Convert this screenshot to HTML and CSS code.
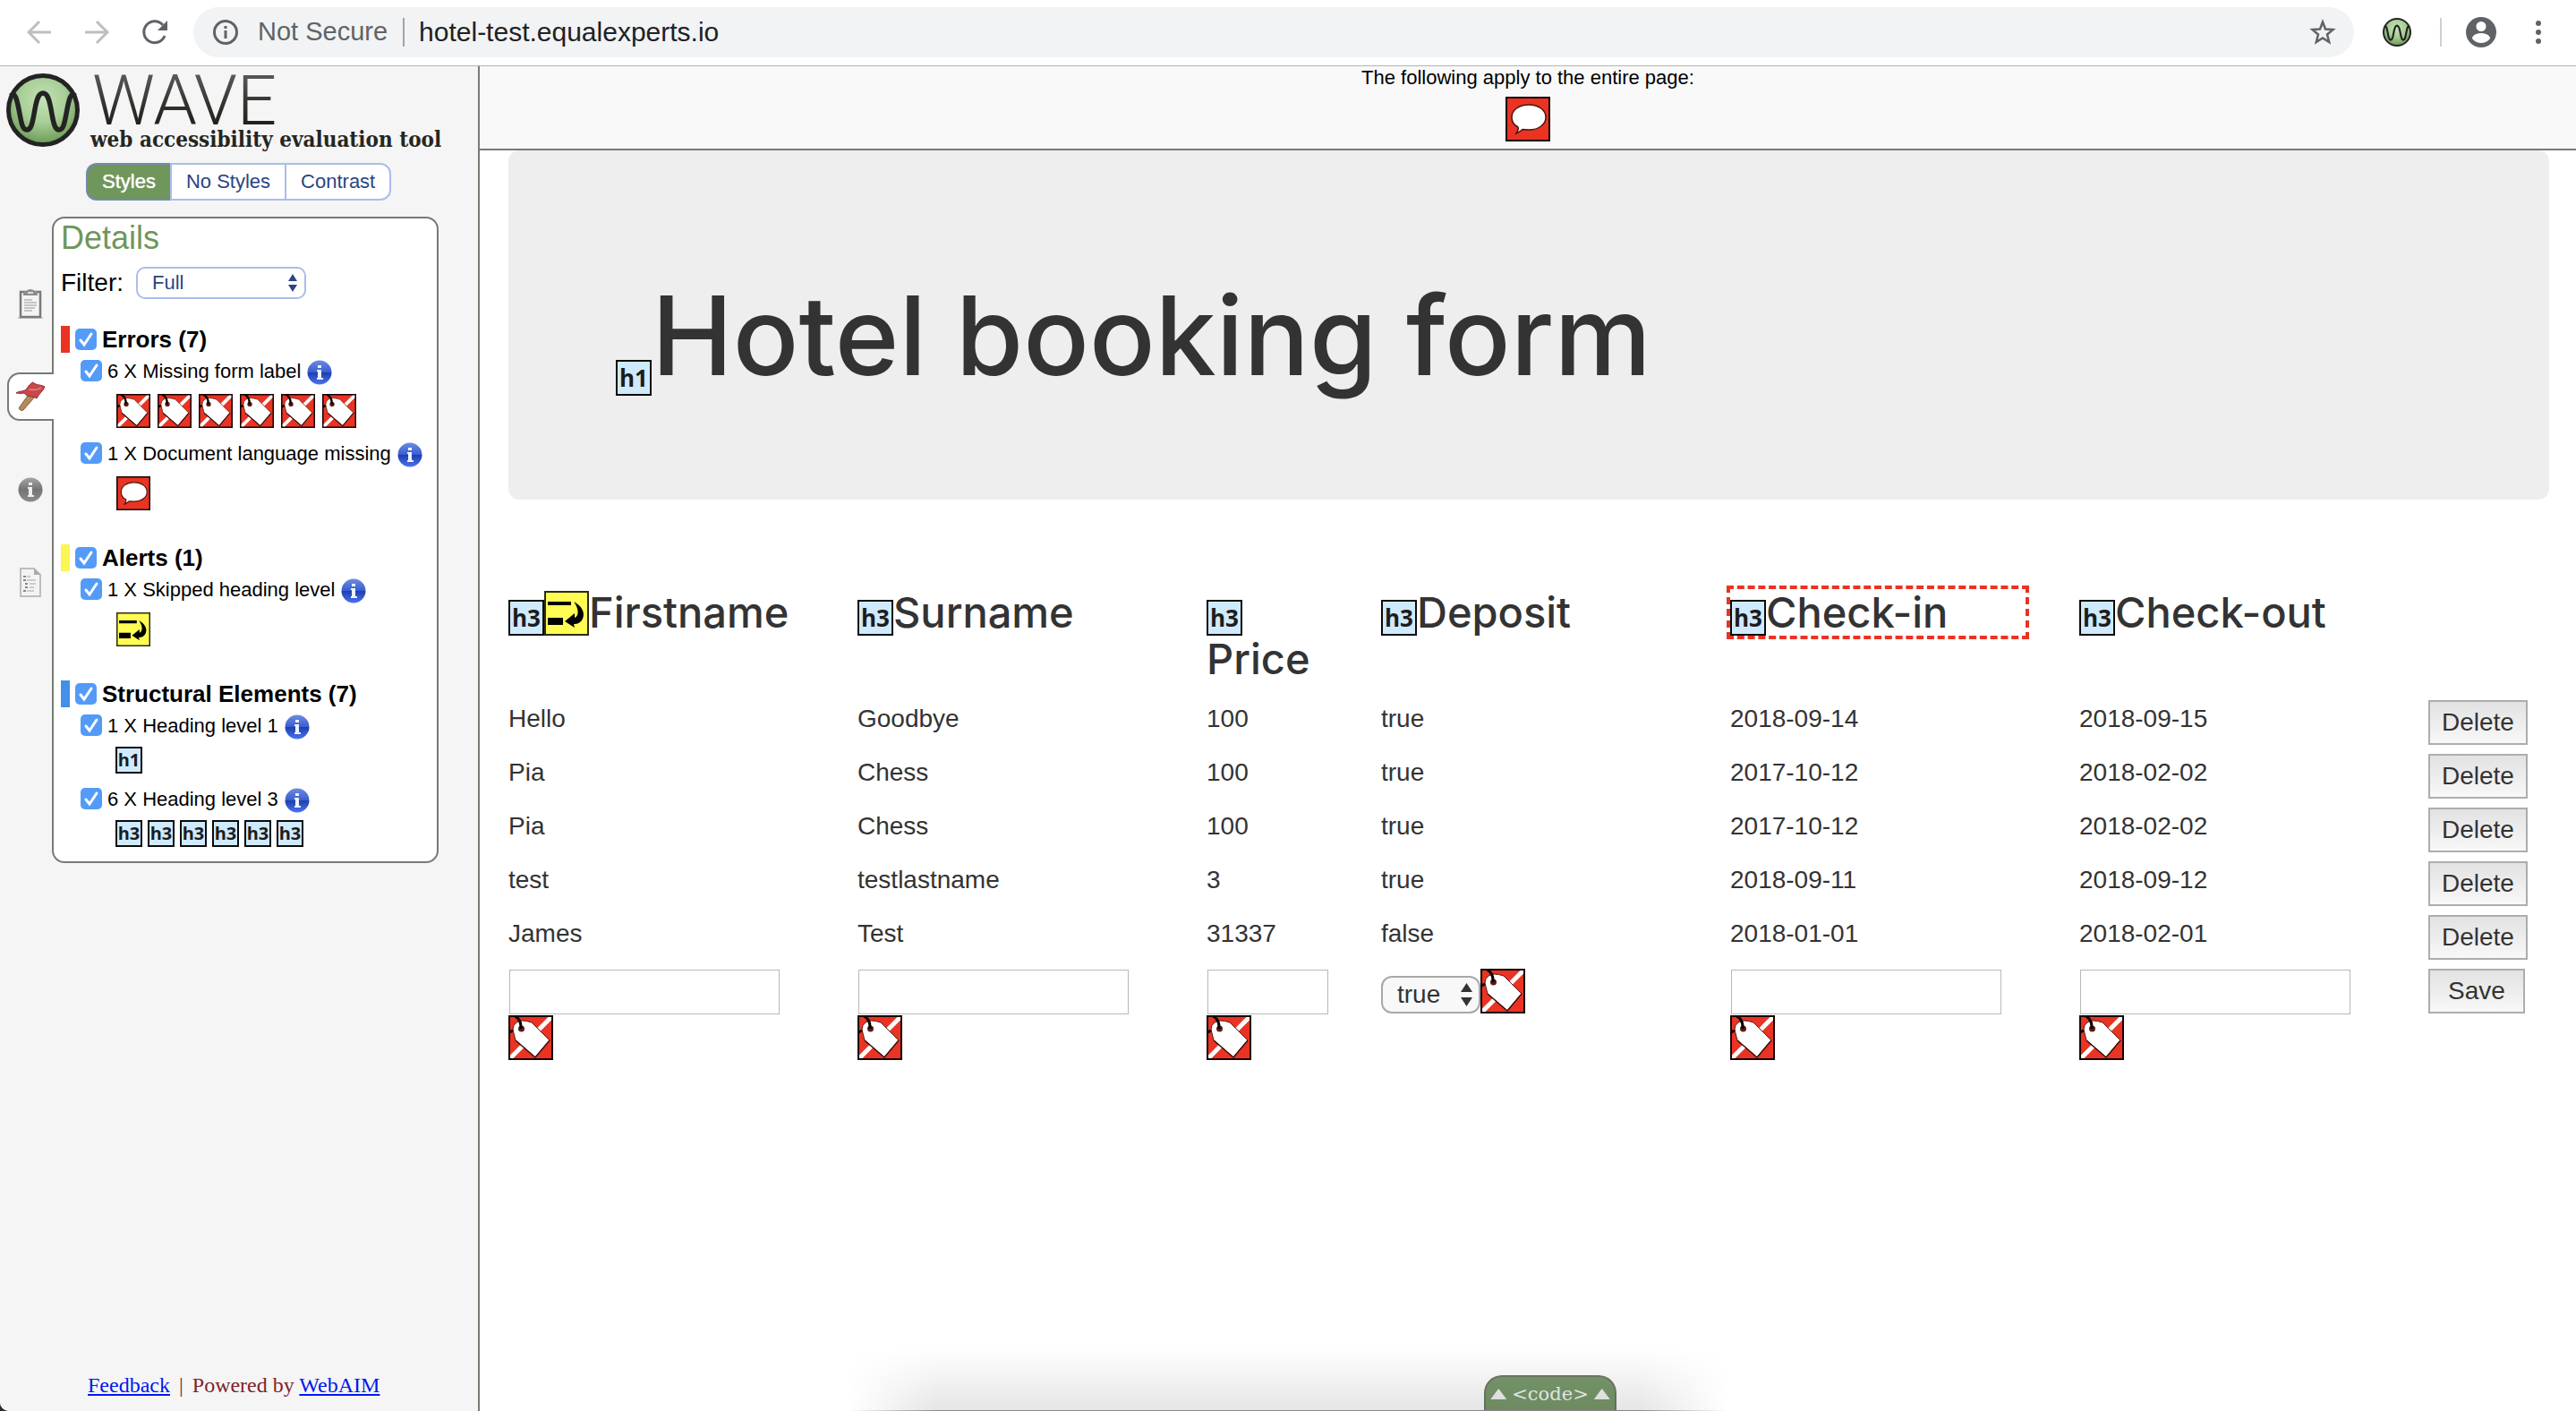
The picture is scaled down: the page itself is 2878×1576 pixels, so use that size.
FILE: index.html
```html
<!DOCTYPE html>
<html lang="en">
<head>
<meta charset="utf-8">
<title>Hotel booking form</title>
<link rel="stylesheet" href="styles.css">
</head>
<body>
<svg class="defs" aria-hidden="true">
  <defs>
    <radialGradient id="green" cx="0.5" cy="0.35" r="0.65">
      <stop offset="0" stop-color="#c3e2b4"/><stop offset="0.5" stop-color="#a9cf98"/><stop offset="1" stop-color="#6b9a54"/>
    </radialGradient>
    <linearGradient id="blue" x1="0" y1="0" x2="0" y2="1">
      <stop offset="0" stop-color="#6f8be0"/><stop offset="0.48" stop-color="#3a5fd0"/><stop offset="0.52" stop-color="#1f3fae"/><stop offset="1" stop-color="#4a74f2"/>
    </linearGradient>
    <linearGradient id="grey" x1="0" y1="0" x2="0" y2="1">
      <stop offset="0" stop-color="#a4a4a4"/><stop offset="0.5" stop-color="#747474"/><stop offset="1" stop-color="#8c8c8c"/>
    </linearGradient>
  </defs>
  <symbol id="wave" viewBox="0 0 82 82">
    <circle cx="41" cy="41" r="38.500" fill="url(#green)" stroke="#232323" stroke-width="5"/>
    <path d="M5 25C10 20 12 30 14 40C17 56 18 63 23 63C29 63 30 50 32 40C34 29 36 22 41 22C46 22 48 29 50 40C52 50 53 63 59 63C64 63 65 56 68 40C70 30 72 20 77 25" fill="none" stroke="#232323" stroke-width="5.500"/>
  </symbol>
  <symbol id="tag" viewBox="0 0 50 50">
    <rect width="50" height="50" fill="#ea3323"/>
    <path d="M-2 52L52 -2" stroke="#fff" stroke-width="5"/>
    <path d="M9 8Q14 4 26 8L46 28L30 47L8 28L5 16Q5 11 9 8Z" fill="#fff" stroke="#5a1510" stroke-width="1"/>
    <path d="M46 28L30 47L8 28" fill="none" stroke="#3c0f0b" stroke-width="1.500"/>
    <circle cx="14.500" cy="15" r="3.500" fill="#5c1a15"/>
    <path d="M6 0Q15 5 14 15M0 20Q3 17 5 18" fill="none" stroke="#000" stroke-width="3"/>
    <rect x="1" y="1" width="48" height="48" fill="none" stroke="#160505" stroke-width="2"/>
  </symbol>
  <symbol id="speech" viewBox="0 0 50 50">
    <rect x="1" y="1" width="48" height="48" fill="#ea3323" stroke="#160505" stroke-width="2"/>
    <path d="M26 9C37 9 45 15 45 23C45 31 37 37 26 37L19 36.500C17 38 15 40 12 41C14 38 15 36 14 34C10 32 7 28 7 23C7 15 15 9 26 9Z" fill="#fff" stroke="#4a1410" stroke-width="1.500"/>
  </symbol>
  <symbol id="skip" viewBox="0 0 50 50">
    <rect x="1" y="1" width="48" height="48" fill="#fffd54" stroke="#2c2c12" stroke-width="2"/>
    <path d="M4 12H30V16H4ZM4 30H21V38H4Z"/>
    <path d="M33 12C42 17 46 24 43 31C41 35 38 37 33 37L34 41L23 34L34 25L34 30C39 28 39 20 33 12Z"/>
  </symbol>
  <symbol id="info-blue" viewBox="0 0 28 28">
    <circle cx="14" cy="14" r="13.500" fill="url(#blue)"/>
    <path d="M12 6H16V9H12ZM11 11H16V20H18V22H11V20H12V13H11Z" fill="#eef2ff"/>
  </symbol>
  <symbol id="info-grey" viewBox="0 0 28 28">
    <circle cx="14" cy="14" r="13.500" fill="url(#grey)"/>
    <path d="M12 6H16V9H12ZM11 11H16V20H18V22H11V20H12V13H11Z" fill="#eee"/>
  </symbol>
</svg>

<header class="toolbar">
  <button class="tool" aria-label="Back"><svg width="28" height="28" viewBox="0 0 28 28" fill="none" stroke="#bdbec0" stroke-width="3"><path d="M27 14H3M14 2L2 14L14 26"/></svg></button>
  <button class="tool" aria-label="Forward"><svg width="28" height="28" viewBox="0 0 28 28" fill="none" stroke="#bdbec0" stroke-width="3"><path d="M1 14H25M14 2L26 14L14 26"/></svg></button>
  <button class="tool" aria-label="Reload"><svg width="30" height="30" viewBox="0 0 30 30"><path d="M26 19A12 12 0 1 1 24 7" fill="none" stroke="#5f6368" stroke-width="3"/><path d="M29 2V13H18Z" fill="#5f6368"/></svg></button>
  <div class="address">
    <svg width="28" height="28" viewBox="0 0 28 28"><circle cx="14" cy="14" r="12.500" fill="none" stroke="#5f6368" stroke-width="3"/><path d="M12.500 7H15.500V10H12.500ZM12.500 12H15.500V21H12.500Z" fill="#5f6368"/></svg>
    <span class="secure">Not Secure</span>
    <input class="url" aria-label="Address" value="hotel-test.equalexperts.io">
    <svg width="30" height="30" viewBox="0 0 30 30"><path d="M15 3.500L18 11.500L26.500 12L20 17.500L22.200 26L15 21.500L7.800 26L10 17.500L3.500 12L12 11.500Z" fill="none" stroke="#5f6368" stroke-width="2.500"/></svg>
  </div>
  <button class="tool ext" aria-label="WAVE extension"><svg width="32" height="32"><use href="#wave"/></svg></button>
  <span class="split"></span>
  <button class="tool" aria-label="Profile"><svg width="34" height="34" viewBox="0 0 34 34"><circle cx="17" cy="17" r="17" fill="#5f6368"/><circle cx="17" cy="10.500" r="5.500" fill="#fff"/><path d="M7 24C7 20 13 18 17 18S27 20 27 24C24.500 27.500 21 29 17 29S9.500 27.500 7 24Z" fill="#fff"/></svg></button>
  <button class="tool kebab" aria-label="Menu"><svg width="6" height="28" viewBox="0 0 6 28" fill="#5f6368"><circle cx="3" cy="4" r="3"/><circle cx="3" cy="14" r="3"/><circle cx="3" cy="24" r="3"/></svg></button>
</header>

<div class="workspace">
  <aside class="sidebar">
    <div class="logo">
      <svg width="82" height="82"><use href="#wave"/></svg>
      <div class="logo-text">
        <div class="logo-name">WAVE</div>
        <div class="logo-tag">web accessibility evaluation tool</div>
      </div>
    </div>
    <div class="modes">
      <button class="mode active">Styles</button><button class="mode">No Styles</button><button class="mode">Contrast</button>
    </div>
    <div class="report">
      <nav class="side-tabs">
        <button class="side-tab" aria-label="Summary"><svg width="30" height="34" viewBox="0 0 30 34"><path d="M1 33H29" stroke="#ccc" stroke-width="2"/><rect x="4" y="4" width="22" height="28" fill="#f4f4f4" stroke="#7a7a7a" stroke-width="2.500"/><path d="M7 8V5Q7 3 10 3Q15 -1 20 3Q23 3 23 5V8Z" fill="#8d8d8d"/><path d="M12 5H18" stroke="#ddd" stroke-width="2"/><path d="M8 13H17M8 16H22M8 19H22M8 22H20M8 25H17" stroke="#b4b4b4" stroke-width="1.500"/></svg></button>
        <button class="side-tab active" aria-label="Details"><svg width="34" height="34" viewBox="0 0 34 34"><path d="M16 13L22 17L9 32Q6 34 4 30Z" fill="#b58a5c" stroke="#7f5b38" stroke-width="1"/><path d="M1 13C5 10 10 12 13 8C16 3 19 1 20 1C24 5 28 3 33 6C31 11 27 13 24 19C19 16 14 18 10 13C6 14 4 13 1 13Z" fill="#c9474b" stroke="#8a3033" stroke-width="1"/><path d="M15 9C19 9 23 11 29 7" fill="none" stroke="#e08a8c" stroke-width="1.500"/></svg></button>
        <button class="side-tab" aria-label="Documentation"><svg width="28" height="28"><use href="#info-grey"/></svg></button>
        <button class="side-tab" aria-label="Outline"><svg width="26" height="34" viewBox="0 0 26 34"><path d="M2 1H17L24 8V32H2Z" fill="#f3f3f3" stroke="#bdbdbd" stroke-width="2"/><path d="M17 1V8H24Z" fill="#aaa"/><path d="M5 10H8M5 14H8M7 18H10M7 22H10M5 26H8" stroke="#888" stroke-width="2"/><path d="M9 10H13M9 14H19M12 18H19M12 22H17M9 26H17" stroke="#ccc" stroke-width="2"/></svg></button>
      </nav>
      <section class="panel">
        <h2 class="panel-title">Details</h2>
        <div class="filter">
          <label for="filter">Filter:</label>
          <select id="filter" class="filter-select"><option>Full</option></select>
        </div>

        <div class="group">
          <label class="group-head errors"><input type="checkbox" class="tick" checked><span>Errors (7)</span></label>
          <div class="item">
            <div class="item-head"><label class="item-label"><input type="checkbox" class="tick" checked><span>6 X Missing form label</span></label><svg class="info"><use href="#info-blue"/></svg></div>
            <div class="icons"><svg class="mark"><use href="#tag"/></svg><svg class="mark"><use href="#tag"/></svg><svg class="mark"><use href="#tag"/></svg><svg class="mark"><use href="#tag"/></svg><svg class="mark"><use href="#tag"/></svg><svg class="mark"><use href="#tag"/></svg></div>
          </div>
          <div class="item">
            <div class="item-head"><label class="item-label"><input type="checkbox" class="tick" checked><span>1 X Document language missing</span></label><svg class="info"><use href="#info-blue"/></svg></div>
            <div class="icons"><svg class="mark"><use href="#speech"/></svg></div>
          </div>
        </div>

        <div class="group">
          <label class="group-head alerts"><input type="checkbox" class="tick" checked><span>Alerts (1)</span></label>
          <div class="item">
            <div class="item-head"><label class="item-label"><input type="checkbox" class="tick" checked><span>1 X Skipped heading level</span></label><svg class="info"><use href="#info-blue"/></svg></div>
            <div class="icons"><svg class="mark"><use href="#skip"/></svg></div>
          </div>
        </div>

        <div class="group">
          <label class="group-head structure"><input type="checkbox" class="tick" checked><span>Structural Elements (7)</span></label>
          <div class="item">
            <div class="item-head"><label class="item-label"><input type="checkbox" class="tick" checked><span>1 X Heading level 1</span></label><svg class="info"><use href="#info-blue"/></svg></div>
            <div class="icons levels"><span class="level small">h1</span></div>
          </div>
          <div class="item">
            <div class="item-head"><label class="item-label"><input type="checkbox" class="tick" checked><span>6 X Heading level 3</span></label><svg class="info"><use href="#info-blue"/></svg></div>
            <div class="icons levels"><span class="level small">h3</span><span class="level small">h3</span><span class="level small">h3</span><span class="level small">h3</span><span class="level small">h3</span><span class="level small">h3</span></div>
          </div>
        </div>
      </section>
    </div>
    <footer class="credits"><a href="#feedback">Feedback</a><span class="bar">|</span><span>Powered by <a href="#webaim">WebAIM</a></span></footer>
  </aside>

  <main class="content">
    <div class="page-notes">
      <p>The following apply to the entire page:</p>
      <svg class="flag"><use href="#speech"/></svg>
    </div>
    <div class="page">
      <div class="hero"><h1><span class="level">h1</span><span class="hero-title">Hotel booking form</span></h1></div>
      <table class="bookings">
        <colgroup><col class="wide"><col class="wide"><col><col class="wide"><col class="wide"><col class="wide"><col></colgroup>
        <thead>
          <tr>
            <th><h3><span class="level">h3</span><svg class="flag"><use href="#skip"/></svg>Firstname</h3></th>
            <th><h3><span class="level">h3</span>Surname</h3></th>
            <th><h3><span class="level">h3</span>Price</h3></th>
            <th><h3><span class="level">h3</span>Deposit</h3></th>
            <th><h3 class="highlight"><span class="level">h3</span>Check-in</h3></th>
            <th><h3><span class="level">h3</span>Check-out</h3></th>
            <td></td>
          </tr>
        </thead>
        <tbody>
          <tr><td>Hello</td><td>Goodbye</td><td>100</td><td>true</td><td>2018-09-14</td><td>2018-09-15</td><td><button class="btn">Delete</button></td></tr>
          <tr><td>Pia</td><td>Chess</td><td>100</td><td>true</td><td>2017-10-12</td><td>2018-02-02</td><td><button class="btn">Delete</button></td></tr>
          <tr><td>Pia</td><td>Chess</td><td>100</td><td>true</td><td>2017-10-12</td><td>2018-02-02</td><td><button class="btn">Delete</button></td></tr>
          <tr><td>test</td><td>testlastname</td><td>3</td><td>true</td><td>2018-09-11</td><td>2018-09-12</td><td><button class="btn">Delete</button></td></tr>
          <tr><td>James</td><td>Test</td><td>31337</td><td>false</td><td>2018-01-01</td><td>2018-02-01</td><td><button class="btn">Delete</button></td></tr>
          <tr>
            <td><input class="field" aria-label="Firstname"><svg class="flag"><use href="#tag"/></svg></td>
            <td><input class="field" aria-label="Surname"><svg class="flag"><use href="#tag"/></svg></td>
            <td><input class="field" aria-label="Price"><svg class="flag"><use href="#tag"/></svg></td>
            <td><div class="deposit"><select class="deposit-select" aria-label="Deposit"><option>true</option><option>false</option></select><svg class="flag"><use href="#tag"/></svg></div></td>
            <td><input class="field" aria-label="Check-in"><svg class="flag"><use href="#tag"/></svg></td>
            <td><input class="field" aria-label="Check-out"><svg class="flag"><use href="#tag"/></svg></td>
            <td><button class="btn save">Save</button></td>
          </tr>
        </tbody>
      </table>
    </div>
    <button class="code"><span class="up"></span>&lt;code&gt;<span class="up"></span></button>
  </main>
</div>
<div class="dock-shadow"></div>
</body>
</html>
```
FILE: styles.css
```css
* { box-sizing: border-box; }

html { background: #2b2b2b; }

body {
  position: relative;
  margin: 0;
  min-height: 100vh;
  display: flex;
  flex-direction: column;
  background: #fff;
  border-bottom-left-radius: 10px;
  overflow: hidden;
  font-family: "Liberation Sans", Arial, sans-serif;
  color: #000;
}

button { font: inherit; cursor: pointer; }
svg { flex: none; }
.defs { position: absolute; width: 0; height: 0; }

/* Browser toolbar */
.toolbar {
  display: flex;
  align-items: center;
  height: 74px;
  padding: 0 38px 2px 30px;
  border-bottom: 1px solid #b6b4b6;
}
.tool {
  display: flex;
  padding: 0;
  margin-right: 36px;
  border: 0;
  background: none;
}
.address {
  flex: 1;
  display: flex;
  align-items: center;
  height: 56px;
  margin-left: -8px;
  padding: 0 20px 0 22px;
  border-radius: 28px;
  background: #f1f3f4;
  font-size: 29px;
}
.secure { margin: 0 17px 0 22px; color: #5f6368; }
.url {
  flex: 1;
  height: 32px;
  padding: 0 0 0 16px;
  border: 0;
  border-left: 2px solid #a2a5a8;
  background: none;
  font: inherit;
  font-size: 30px;
  color: #202124;
  outline: 0;
}
.ext { margin: 0 32px; }
.split { width: 2px; height: 32px; margin-right: 27px; background: #d0d1d3; }
.kebab { margin: 0 1px 0 8px; }

/* Two-pane layout */
.workspace { flex: 1; display: flex; }
.sidebar {
  display: flex;
  flex-direction: column;
  flex: none;
  width: 536px;
  background: #f5f5f5;
  border-right: 2px solid #757c73;
}

/* Logo and display modes */
.logo { display: flex; gap: 12px; padding: 8px 7px 0; }
.logo-name {
  padding-left: 2px;
  font: 300 78px/62px Roboto, sans-serif;
  color: transparent;
  background: linear-gradient(#5a5a5a, #33332f 55%, #1c1c18);
  background-clip: text;
}
.logo-tag {
  font: bold 24px/24px "DejaVu Serif Condensed", "DejaVu Serif", serif;
  color: #26261f;
  white-space: nowrap;
}
.modes { display: flex; margin: 14px 0 18px 96px; }
.mode {
  height: 42px;
  padding: 0 16px;
  border: 2px solid #abbdea;
  margin-left: -2px;
  background: #fff;
  color: #2d4481;
  font-size: 22px;
  line-height: 34px;
}
.mode:first-child { margin-left: 0; border-radius: 12px 0 0 12px; }
.mode:last-child { border-radius: 0 12px 12px 0; }
.mode.active {
  background: #6f965b;
  border-color: #7388b4;
  border-right-color: #6f965b;
  color: #fff;
  text-shadow: 0 0 1px #fff;
}

/* Report panel */
.report { display: flex; }
.side-tabs {
  display: flex;
  flex-direction: column;
  gap: 50px;
  width: 58px;
  padding: 70px 0 0 8px;
}
.side-tab {
  display: flex;
  align-items: center;
  justify-content: center;
  height: 54px;
  width: 52px;
  padding: 0 2px 0 0;
  border: 2px solid transparent;
  border-right: 0;
  border-radius: 14px 0 0 14px;
  background: none;
}
.side-tab.active {
  position: relative;
  background: #fff;
  border-color: #757c73;
}
.panel {
  width: 432px;
  padding: 2px 8px 16px;
  border: 2px solid #757c73;
  border-radius: 14px;
  background: #fff;
}
.panel-title {
  margin: 0 0 12px;
  font-size: 36px;
  font-weight: normal;
  line-height: 40px;
  color: #6f965b;
}
.filter {
  display: flex;
  align-items: center;
  gap: 14px;
  margin-bottom: 30px;
  font-size: 28px;
  line-height: 36px;
}
.filter-select {
  appearance: none;
  width: 190px;
  height: 36px;
  padding: 0 16px;
  border: 2px solid #abbdea;
  border-radius: 10px;
  background: #fff url('data:image/svg+xml,<svg xmlns="http://www.w3.org/2000/svg" width="10" height="20"><path d="M5 0L10 8H0ZM5 20L10 12H0Z" fill="%232f4486"/></svg>') no-repeat right 8px center;
  color: #2d4481;
  font: inherit;
  font-size: 22px;
  line-height: 30px;
}
.group + .group { margin-top: 38px; }
.group-head {
  display: flex;
  align-items: center;
  gap: 6px;
  height: 30px;
  padding-left: 6px;
  border-left: 10px solid;
  font-size: 26px;
  font-weight: bold;
}
.group-head span { color: #000; }
.errors { border-color: #ea3323; }
.alerts { border-color: #fdf551; }
.structure { border-color: #4490e6; }
.tick {
  appearance: none;
  flex: none;
  width: 24px;
  height: 24px;
  margin: 0;
  border-radius: 5px;
  background: #549bf8 url('data:image/svg+xml,<svg xmlns="http://www.w3.org/2000/svg" width="24" height="24"><path d="M6 13L10 18L18 6" fill="none" stroke="white" stroke-width="3" stroke-linecap="round"/></svg>');
}
.item { margin-top: 16px; padding-left: 22px; }
.group-head + .item { margin-top: 8px; }
.item-head, .item-label { display: flex; }
.item-head { gap: 7px; height: 28px; }
.item-label {
  gap: 6px;
  font-size: 22px;
  line-height: 26px;
}
.info { width: 28px; height: 28px; }
.icons { display: flex; gap: 8px; padding: 10px 0 0 40px; }
.icons.levels { gap: 6px; padding: 8px 0 0 39px; }
.mark { width: 38px; height: 38px; }
.level {
  display: inline-block;
  width: 40px;
  height: 40px;
  border: 2px solid #0a0a0a;
  background: #cfeafd;
  color: #1c1c1c;
  font: 700 26px/36px "Open Sans", sans-serif;
  text-align: center;
  vertical-align: bottom;
}
.level.small {
  width: 30px;
  height: 30px;
  font-size: 20px;
  line-height: 26px;
}
.credits {
  display: flex;
  gap: 10px;
  margin-top: auto;
  padding: 0 0 15px 98px;
  font: 24px/28px "Liberation Serif", "Times New Roman", serif;
  color: #802426;
}
.credits a { color: #0018ee; }

/* Inspected page */
.content {
  position: relative;
  flex: 1;
  min-width: 0;
}
.page-notes {
  display: flex;
  flex-direction: column;
  align-items: center;
  height: 94px;
  background: #f9f9f9;
  border-bottom: 2px solid #757c73;
}
.page-notes p { margin: 0 0 8px; font-size: 22px; line-height: 26px; }
.flag { width: 50px; height: 50px; vertical-align: bottom; }
.page {
  padding-left: 2px;
  color: #333;
  font-size: 28px;
  line-height: 42px;
}
.hero {
  margin: 0 30px 100px;
  padding: 134px 120px 116px;
  border-radius: 12px;
  background: #eee;
}
.hero h1 {
  display: flex;
  align-items: flex-end;
  margin: 0;
  font-family: Inter, sans-serif;
  font-size: 122px;
  font-weight: 500;
  line-height: 140px;
}
.hero-title { padding-top: 6px; line-height: 134px; }
.bookings {
  width: 100%;
  table-layout: fixed;
  border-collapse: collapse;
}
.bookings col { width: 8.3333%; }
.bookings col.wide { width: 16.6667%; }
.bookings th, .bookings td {
  padding: 0 30px 8px;
  text-align: left;
  vertical-align: top;
}
.bookings tbody tr { height: 60px; }
.bookings h3 {
  margin: 0 0 12px;
  font-family: Inter, sans-serif;
  font-size: 47px;
  font-weight: 500;
  line-height: 52px;
}
.highlight { outline: 4px dashed #ea3323; }
.btn {
  display: block;
  height: 50px;
  padding: 0 13px;
  border: 2px solid #adadad;
  background: linear-gradient(#e2e2e2, #f8f8f8);
  color: #333;
  font-size: 28px;
}
.btn.save { padding: 0 20px; }
.field {
  display: block;
  width: 302px;
  max-width: 100%;
  height: 50px;
  margin: 1px;
  border: 1px solid #b8b8b8;
  background: #fff;
}
.deposit { display: flex; align-items: flex-end; }
.deposit-select {
  appearance: none;
  width: 111px;
  height: 42px;
  padding: 0 16px;
  border: 2px solid #a8a8a8;
  border-radius: 12px;
  background: #f8f8f8 url('data:image/svg+xml,<svg xmlns="http://www.w3.org/2000/svg" width="13" height="26"><path d="M6.500 0L13 10H0ZM6.500 26L13 16H0Z" fill="%23333"/></svg>') no-repeat right 7px center;
  color: #333;
  font: inherit;
  font-size: 28px;
  line-height: 36px;
}

/* Code drawer handle, with the shadow of the dock along the window's edge */
.dock-shadow {
  position: absolute;
  left: calc(50% - 490px);
  bottom: 0;
  width: 980px;
  height: 70px;
  background: linear-gradient(transparent, rgba(0, 0, 0, 0.1));
  border-bottom: 1px solid #888;
  mask-image: linear-gradient(90deg, transparent, #000 10%, #000 90%, transparent);
  pointer-events: none;
}
.code {
  position: absolute;
  left: calc(50% - 49px);
  bottom: 0;
  display: flex;
  justify-content: center;
  align-items: center;
  gap: 6px;
  width: 148px;
  height: 40px;
  padding: 0;
  border: 2px solid #6f7a69;
  border-bottom: 0;
  border-radius: 20px 20px 0 0;
  background: #7a9a6d;
  color: #f2f6f0;
  font: 21px/36px "DejaVu Serif", serif;
}
.up {
  width: 18px;
  height: 12px;
  background: #f2f4f0;
  clip-path: polygon(50% 0, 100% 100%, 0 100%);
}
```
